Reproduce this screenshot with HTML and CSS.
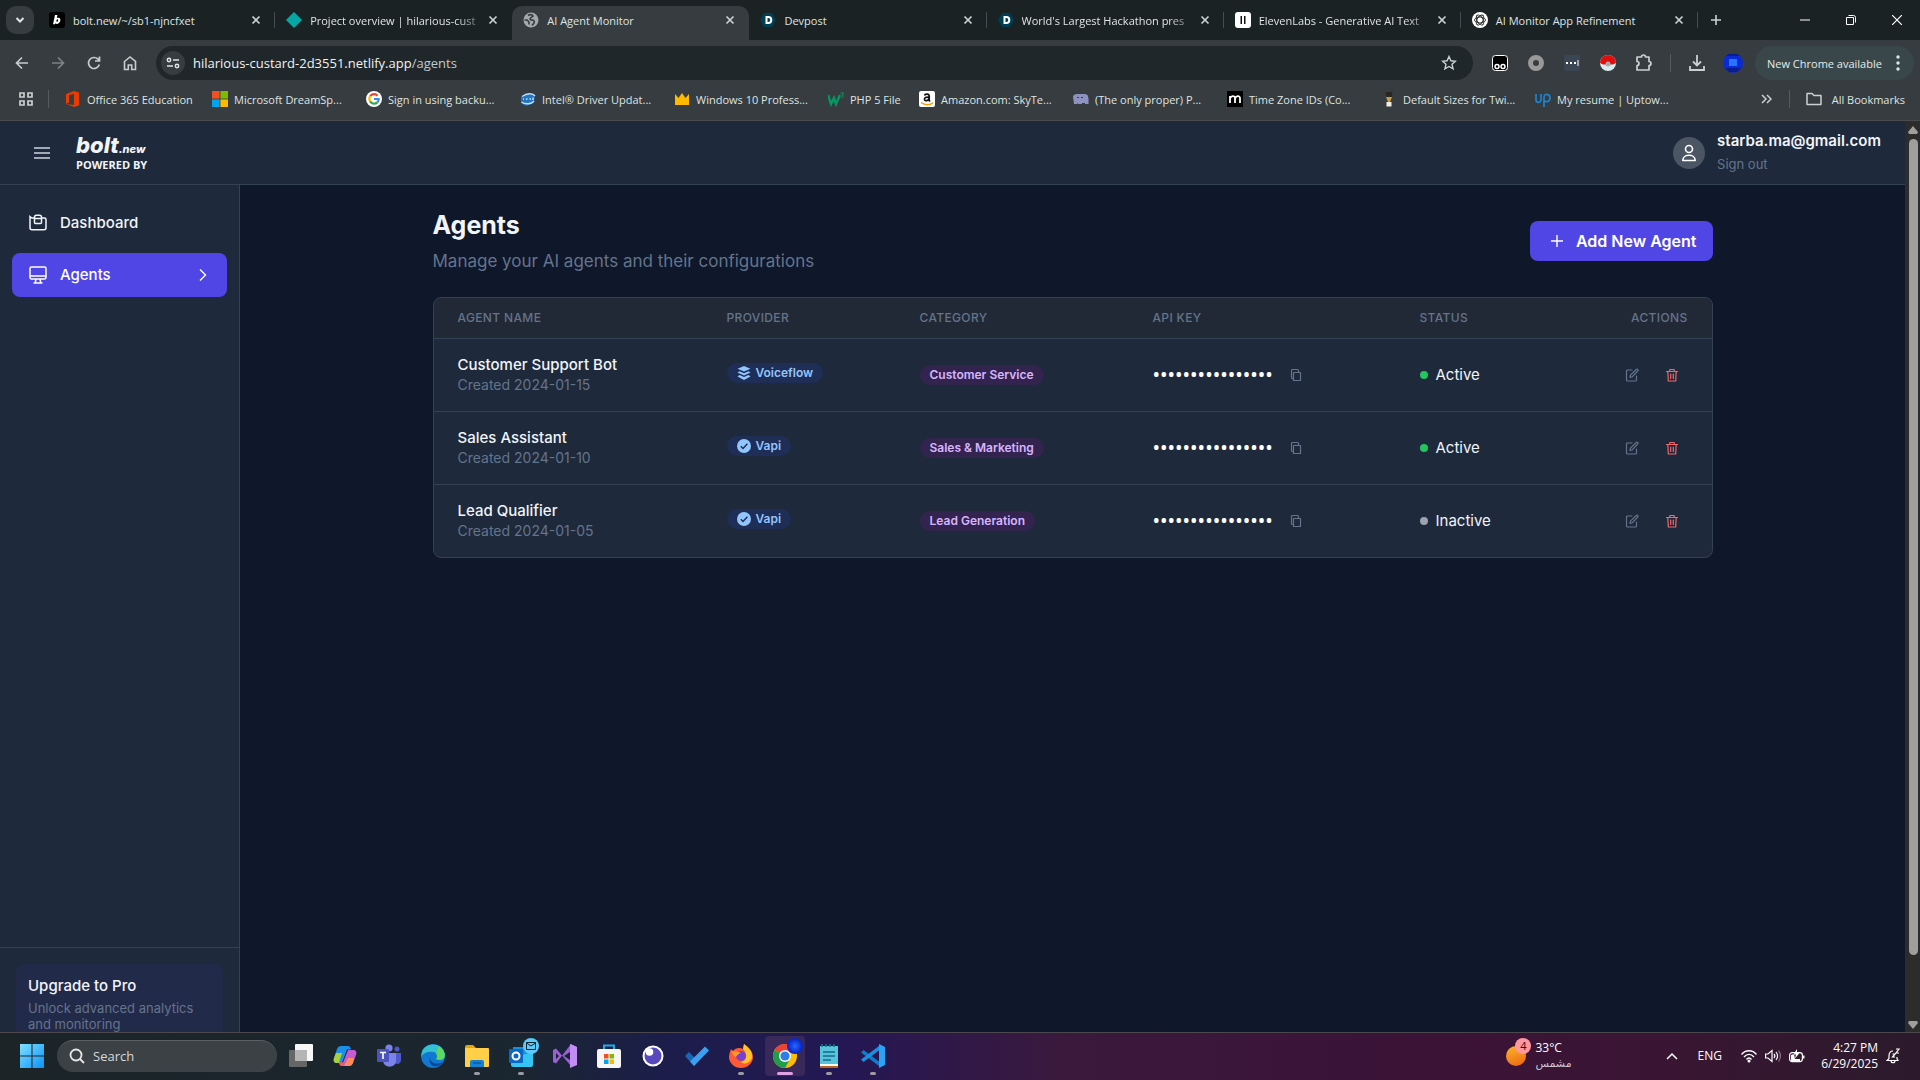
FILE: index.html
```html
<!DOCTYPE html>
<html lang="en">
<head>
    <meta charset="utf-8">
    <meta name="viewport" content="width=device-width, initial-scale=1">
    <title>AI Agent Monitor</title>
    <link rel="stylesheet" href="styles.css">
</head>
<body>
    <!-- shared icons -->
    <svg class="sprite" width="0" height="0">
        <symbol id="i-close" viewBox="0 0 10 10"><path d="M1.500 1.500l7 7M8.500 1.500l-7 7" fill="none" stroke="currentColor" stroke-width="1.700"/></symbol>
        <symbol id="i-devpost" viewBox="0 0 16 16"><path d="M4 1h8l4 7-4 7H4L0 8z" fill="#003e54"/><path d="M5.500 4h2.800a4 4 0 0 1 0 8H5.500zM7.500 6v4h.8a2 2 0 0 0 0-4z" fill="#fff"/></symbol>
        <symbol id="i-copy" viewBox="0 0 14 14"><path d="M4.500 4.500h7v8h-7zM4.500 10.500h-1a1 1 0 0 1-1-1v-7a1 1 0 0 1 1-1h5a1 1 0 0 1 1 1v2" fill="none" stroke="currentColor" stroke-width="1.200" stroke-linejoin="round"/></symbol>
        <symbol id="i-edit" viewBox="0 0 14 14"><path d="M7 2H2.500a1 1 0 0 0-1 1v9a1 1 0 0 0 1 1h8a1 1 0 0 0 1-1V8M5 9.500l.5-2.300 5.700-5.700a1 1 0 0 1 1.500 1.500L7.200 8.800z" fill="none" stroke="currentColor" stroke-width="1.200" stroke-linejoin="round" stroke-linecap="round"/></symbol>
        <symbol id="i-trash" viewBox="0 0 14 14"><path d="M1.500 3.500h11M2.800 3.500l.5 9.500h7.400l.5-9.500M4.800 3.500v-2h4.400v2M5.700 6v4.500M8.300 6v4.500" fill="none" stroke="currentColor" stroke-width="1.200" stroke-linejoin="round" stroke-linecap="round"/></symbol>
        <symbol id="i-check" viewBox="0 0 14 14"><circle cx="7" cy="7" r="7" fill="currentColor"/><path d="M3.800 7.300l2.200 2.200 4.400-4.700" fill="none" stroke="#1e2b50" stroke-width="1.400"/></symbol>
    </svg>

    <div class="tabstrip">
        <button class="tab-search" aria-label="Search tabs"><svg width="10" height="10" viewBox="0 0 10 10"><path d="M1.500 3l3.500 3.500L8.500 3" fill="none" stroke="#dfe4e4" stroke-width="2"/></svg></button>
        <div class="tabs">
            <div class="tab">
                <svg class="favicon" viewBox="0 0 16 16"><rect width="16" height="16" rx="3" fill="#000"/><path d="M6 3h2.400L7.800 6c2.500-1 4 .3 3.500 2.800-.6 3-3.600 3.900-5 2.500L6 12.300H4zM7.500 8.200c-.5 2 1.300 2 1.600.3.300-1.500-1.200-1.700-1.600-.3z" fill="#fff"/></svg>
                <span>bolt.new/~/sb1-njncfxet</span>
                <button aria-label="Close"><svg><use href="#i-close"/></svg></button>
            </div>
            <div class="tab no-sep">
                <svg class="favicon" viewBox="0 0 16 16"><path d="M8 0l8 8-8 8-8-8z" fill="#05a8a5"/></svg>
                <span class="fade">Project overview | hilarious-cust</span>
                <button aria-label="Close"><svg><use href="#i-close"/></svg></button>
            </div>
            <div class="tab active no-sep">
                <svg class="favicon" viewBox="0 0 16 16"><circle cx="8" cy="8" r="7.500" fill="#a3aaab"/><path d="M5 3.500c2-1.500 4-1 5 .5L7.500 6c-1 1 0 2 1.500 2s3 1 2 3l-2 2.500M1.500 8H4l2 2v2.500" fill="none" stroke="#363c3f" stroke-width="1.600"/></svg>
                <span>AI Agent Monitor</span>
                <button aria-label="Close"><svg><use href="#i-close"/></svg></button>
            </div>
            <div class="tab">
                <svg class="favicon"><use href="#i-devpost"/></svg>
                <span>Devpost</span>
                <button aria-label="Close"><svg><use href="#i-close"/></svg></button>
            </div>
            <div class="tab">
                <svg class="favicon"><use href="#i-devpost"/></svg>
                <span class="fade">World's Largest Hackathon pres</span>
                <button aria-label="Close"><svg><use href="#i-close"/></svg></button>
            </div>
            <div class="tab">
                <svg class="favicon" viewBox="0 0 16 16"><rect width="16" height="16" rx="3" fill="#fff"/><path d="M5.500 4h1.500v8H5.500zM9 4h1.500v8H9z" fill="#111"/></svg>
                <span class="fade">ElevenLabs - Generative AI Text</span>
                <button aria-label="Close"><svg><use href="#i-close"/></svg></button>
            </div>
            <div class="tab">
                <svg class="favicon" viewBox="0 0 16 16"><circle cx="8" cy="8" r="8" fill="#fff"/><g fill="none" stroke="#222" stroke-width=".9"><ellipse cx="8" cy="8" rx="5.500" ry="3"/><ellipse cx="8" cy="8" rx="5.500" ry="3" transform="rotate(60 8 8)"/><ellipse cx="8" cy="8" rx="5.500" ry="3" transform="rotate(120 8 8)"/></g></svg>
                <span>AI Monitor App Refinement</span>
                <button aria-label="Close"><svg><use href="#i-close"/></svg></button>
            </div>
        </div>
        <button class="new-tab" aria-label="New tab"><svg width="12" height="12" viewBox="0 0 12 12"><path d="M6 1v10M1 6h10" stroke="#c9d1d1" stroke-width="1.600"/></svg></button>
        <div class="window-buttons">
            <button aria-label="Minimize"><svg width="10" height="10" viewBox="0 0 10 10"><path d="M0 5h10" stroke="#fff"/></svg></button>
            <button aria-label="Restore"><svg width="10" height="10" viewBox="0 0 10 10"><path d="M.5 2.500h7v7h-7zM2.500.5h5a2 2 0 0 1 2 2v5" fill="none" stroke="#fff"/></svg></button>
            <button aria-label="Close window"><svg width="10" height="10" viewBox="0 0 10 10"><path d="M0 0l10 10M10 0L0 10" stroke="#fff" stroke-width="1.200"/></svg></button>
        </div>
    </div>

    <div class="toolbar">
        <div class="nav-buttons">
            <button aria-label="Back"><svg width="16" height="16" viewBox="0 0 16 16"><path d="M14 8H3M8 2.500L2.500 8 8 13.500" fill="none" stroke="#c5cdcd" stroke-width="1.700"/></svg></button>
            <button aria-label="Forward"><svg width="16" height="16" viewBox="0 0 16 16"><path d="M2 8h11M8 2.500L13.500 8 8 13.500" fill="none" stroke="#7b8485" stroke-width="1.700"/></svg></button>
            <button aria-label="Reload"><svg width="16" height="16" viewBox="0 0 16 16"><path d="M13.300 9.500A5.500 5.500 0 1 1 12 4.200l1.500 1.600M13.500 1.500v4.500H9" fill="none" stroke="#c5cdcd" stroke-width="1.700"/></svg></button>
            <button aria-label="Home"><svg width="16" height="16" viewBox="0 0 16 16"><path d="M2.500 6.500L8 2l5.500 4.500v8h-3.800V10H6.300v4.500H2.500z" fill="none" stroke="#c5cdcd" stroke-width="1.600"/></svg></button>
        </div>
        <div class="omnibox">
            <button class="site-info" aria-label="Site information"><svg width="14" height="14" viewBox="0 0 14 14"><g fill="none" stroke="#dfe4e4" stroke-width="1.500"><circle cx="3" cy="4" r="1.700"/><path d="M7 4h6M1 10h6"/><circle cx="11" cy="10" r="1.700"/></g></svg></button>
            <span class="url">hilarious-custard-2d3551.netlify.app<span>/agents</span></span>
            <button class="star" aria-label="Bookmark this tab"><svg width="16" height="16" viewBox="0 0 16 16"><path d="M8 1.500l1.900 4.300 4.600.4-3.500 3.100 1.100 4.600L8 11.500l-4.100 2.400L5 9.300 1.500 6.200l4.600-.4z" fill="none" stroke="#c9d1d1" stroke-width="1.400"/></svg></button>
        </div>
        <div class="extensions">
            <button aria-label="Tampermonkey"><svg width="16" height="16" viewBox="0 0 16 16"><rect x=".5" y=".5" width="15" height="15" rx="3" fill="#000" stroke="#fff"/><g fill="none" stroke="#fff" stroke-width="1.500"><circle cx="5" cy="11.500" r="2"/><circle cx="11" cy="11.500" r="2"/></g></svg></button>
            <button aria-label="Ring extension"><svg width="16" height="16" viewBox="0 0 16 16"><circle cx="8" cy="8" r="5.500" fill="none" stroke="#999" stroke-width="5"/></svg></button>
            <button aria-label="Password extension"><svg width="16" height="16" viewBox="0 0 16 16"><rect width="16" height="16" rx="2" fill="#3a4654"/><path d="M2 7h2v2H2zM6 7h2v2H6zM10 7h2v2h-2zM13.500 5h1v6h-1z" fill="#fff"/></svg></button>
            <button aria-label="Ball extension"><svg width="16" height="16" viewBox="0 0 16 16"><circle cx="8" cy="8" r="8" fill="#d9ecef"/><path d="M0 8a8 8 0 0 1 16 0l-3 1.500H3z" fill="#e00f0f"/><circle cx="8" cy="9" r="2.500" fill="#aaa"/></svg></button>
            <button aria-label="Extensions"><svg width="18" height="18" viewBox="0 0 18 18"><path d="M2 3h4.500a2 2 0 0 1 4 0H14v4.500a2 2 0 0 1 0 4V16H2v-4.500a2 2 0 0 0 0-4z" fill="none" stroke="#c9d1d1" stroke-width="1.700" stroke-linejoin="round"/></svg></button>
            <i class="divider"></i>
            <button aria-label="Downloads"><svg width="16" height="16" viewBox="0 0 16 16"><path d="M8 0v10M4 6.500l4 4 4-4M1 11v4h14v-4" fill="none" stroke="#c9d1d1" stroke-width="1.800"/></svg></button>
            <button aria-label="Profile"><svg width="20" height="20" viewBox="0 0 20 20"><circle cx="10" cy="10" r="10" fill="#0a2bd4"/><path d="M3 3h14l-3-2H6z" fill="#0a1d8c"/><rect x="6" y="6" width="8" height="7" fill="#2873ff"/><path d="M2 15h16l-4 4H6z" fill="#0a1d8c"/></svg></button>
        </div>
        <button class="update">New Chrome available<svg width="4" height="16" viewBox="0 0 4 16"><g fill="#dbe6e6"><circle cx="2" cy="2" r="1.700"/><circle cx="2" cy="8" r="1.700"/><circle cx="2" cy="14" r="1.700"/></g></svg></button>
    </div>

    <div class="bookmarks">
        <button class="apps" aria-label="Apps"><svg width="14" height="14" viewBox="0 0 14 14"><path d="M1 1h4v4H1zM9 1h4v4H9zM1 9h4v4H1zM9 9h4v4H9z" fill="none" stroke="#c9d1d1" stroke-width="1.700"/></svg></button>
        <i class="divider"></i>
        <nav>
            <a class="medium" href="#"><svg viewBox="0 0 16 16"><path d="M1 3l8-3 5 1.500v13L9 16l-8-3 8 1V3L4 4v7.500L1 13z" fill="#eb3c00"/></svg>Office 365 Education</a>
            <a href="#"><svg viewBox="0 0 16 16"><path d="M0 0h7.600v7.600H0z" fill="#f25022"/><path d="M8.400 0H16v7.600H8.400z" fill="#7fba00"/><path d="M0 8.400h7.600V16H0z" fill="#00a4ef"/><path d="M8.400 8.400H16V16H8.400z" fill="#ffb900"/></svg>Microsoft DreamSp...</a>
            <a href="#"><svg viewBox="0 0 16 16"><circle cx="8" cy="8" r="8" fill="#fff"/><g fill="none" stroke-width="2.200"><path d="M4.200 5.200A4.700 4.700 0 0 1 11.500 4.700" stroke="#ea4335"/><path d="M4 10.300a5 5 0 0 1 .2-5.100" stroke="#fbbc05"/><path d="M11.300 11.400A4.700 4.700 0 0 1 4 10.300" stroke="#34a853"/><path d="M8 8h4.700a4.700 4.700 0 0 1-1.400 3.400" stroke="#4285f4"/></g></svg>Sign in using backu...</a>
            <a href="#"><svg viewBox="0 0 16 16"><path d="M1 6l9-4 5 2-1 8-8 3-5-3z" fill="#2475bd"/><path d="M2 5.500C7 2 13 2 15 5M1.500 11c4 3 10 2 12.500-1M3 8h1m2 0h1.500m2 0H11m2-1.500V9" fill="none" stroke="#b8e0ff" stroke-width="1.400"/></svg>Intel® Driver Updat...</a>
            <a href="#"><svg viewBox="0 0 16 16"><path d="M1 3l3.500 4L8 2l3.500 5L15 3v8H1zM1 11h14v3H1z" fill="#ffb900"/></svg>Windows 10 Profess...</a>
            <a class="short" href="#"><svg viewBox="0 0 16 16"><path d="M0 4l3 9 3-6 2 6 4-9" fill="none" stroke="#059862" stroke-width="2.400"/><path d="M12.500 2h3l-1.500 2c2 0 2 2.500-1 2.500" fill="none" stroke="#059862"/></svg>PHP 5 File</a>
            <a href="#"><svg viewBox="0 0 16 16"><rect width="16" height="16" rx="2" fill="#fff"/><path d="M5.500 4.500c.5-2 4.700-2 4.700.5v4.500l.8 1M10 6.200c-3-.2-4.800.5-4.500 2.300.4 2 4 1.300 4.500-1" fill="none" stroke="#111" stroke-width="1.700"/><path d="M2 11.500c4 3 8 3 12 .3" fill="none" stroke="#f90" stroke-width="1.500"/></svg>Amazon.com: SkyTe...</a>
            <a href="#"><svg viewBox="0 0 16 16"><path d="M0 6c0-2 2-3 4-3h8c3 0 4 3 3.500 10H12v-1H9v1H5v-1l-1 1H1z" fill="#8d92bf"/><path d="M4 6.500h2m2 0h2" stroke="#363c3f"/></svg>(The only proper) P...</a>
            <a href="#"><svg viewBox="0 0 16 16"><path d="M0 0h16v16H0z" fill="#000"/><path d="M3 12V5m0 2.500C4 4.500 8 4.500 8 7v5M8 7.500C9 4.500 13 4.500 13 7v5" fill="none" stroke="#fff" stroke-width="1.800"/></svg>Time Zone IDs (Co...</a>
            <a href="#"><svg viewBox="0 0 16 16"><path d="M4.500 1h7l-1 6h-5z" fill="#2a2620"/><path d="M5 6h6l-2 5H7z" fill="#c89b48"/><path d="M5.500 11h5v4.500h-5z" fill="#f3eee0"/></svg>Default Sizes for Twi...</a>
            <a href="#"><svg viewBox="0 0 16 16"><path d="M1 3v5.500c0 4 5 4 5 0V3M9 16V6c0-4 6-3.500 6 1s-5.500 4.500-6 2" fill="none" stroke="#1d83cf" stroke-width="1.700"/></svg>My resume | Uptow...</a>
        </nav>
        <button class="more" aria-label="More bookmarks"><svg width="12" height="10" viewBox="0 0 12 10"><path d="M2 1l4 4-4 4M7 1l4 4-4 4" fill="none" stroke="#c9d1d1" stroke-width="1.500"/></svg></button>
        <i class="divider"></i>
        <a class="all" href="#"><svg viewBox="0 0 16 16"><path d="M1 13.500v-11h5l2 2h7v9z" fill="none" stroke="#c9d1d1" stroke-width="1.500" stroke-linejoin="round"/></svg>All Bookmarks</a>
    </div>

    <div class="viewport">
        <div class="app">
            <header class="app-header">
                <button class="menu" aria-label="Toggle menu"><svg width="16" height="14" viewBox="0 0 16 14"><path d="M0 2h16M0 7h16M0 12h16" stroke="#cbd5e1" stroke-width="1.600"/></svg></button>
                <a class="brand" href="#"><span class="brand-name">bolt<small>.new</small></span><span class="powered">POWERED BY</span></a>
                <div class="user">
                    <span class="avatar"><svg width="16" height="18" viewBox="0 0 16 18"><g fill="none" stroke="#fff" stroke-width="1.600"><circle cx="8" cy="5" r="3.500"/><path d="M1.800 16.500c0-7 12.400-7 12.400 0z" stroke-linejoin="round"/></g></svg></span>
                    <div>
                        <p class="email">starba.ma@gmail.com</p>
                        <button class="sign-out">Sign out</button>
                    </div>
                </div>
            </header>

            <div class="app-body">
                <aside>
                    <nav>
                        <a href="#"><svg viewBox="0 0 20 20"><path d="M6.500 5H3.800L2 3.500v11.300a2 2 0 0 0 2 2h12a2 2 0 0 0 2-2V6.500A1.500 1.500 0 0 0 16.500 5h-3M6.500 9.500V4.300a2 2 0 0 1 2-2h3a2 2 0 0 1 2 2v5.200a1 1 0 0 1-1 1h-5a1 1 0 0 1-1-1zM6.500 5.500h7" fill="none" stroke="currentColor" stroke-width="1.500"/></svg>Dashboard</a>
                        <a class="current" href="#"><svg viewBox="0 0 20 20"><path d="M3.500 2h13a1.500 1.500 0 0 1 1.500 1.500v9a1.500 1.500 0 0 1-1.500 1.500h-13A1.500 1.500 0 0 1 2 12.500v-9A1.500 1.500 0 0 1 3.500 2zM2 11h16M8 14l-.8 4M12 14l.8 4M5.500 18h9" fill="none" stroke="currentColor" stroke-width="1.500"/></svg>Agents<svg class="chevron" viewBox="0 0 16 16"><path d="M5 2.500L10.500 8 5 13.500" fill="none" stroke="currentColor" stroke-width="1.400"/></svg></a>
                    </nav>
                    <div class="aside-footer">
                        <div class="upgrade">
                            <h4>Upgrade to Pro</h4>
                            <p>Unlock advanced analytics and monitoring</p>
                        </div>
                    </div>
                </aside>

                <main>
                    <div class="content">
                        <div class="page-head">
                            <div>
                                <h1>Agents</h1>
                                <p>Manage your AI agents and their configurations</p>
                            </div>
                            <button class="add"><svg width="14" height="14" viewBox="0 0 14 14"><path d="M7 1v12M1 7h12" stroke="#fff" stroke-width="1.400"/></svg>Add New Agent</button>
                        </div>

                        <div class="card">
                            <table>
                                <thead>
                                    <tr>
                                        <th class="c-name">AGENT NAME</th>
                                        <th class="c-provider">PROVIDER</th>
                                        <th class="c-category">CATEGORY</th>
                                        <th class="c-key">API KEY</th>
                                        <th class="c-status">STATUS</th>
                                        <th class="c-actions">ACTIONS</th>
                                    </tr>
                                </thead>
                                <tbody>
                                    <tr>
                                        <td><div class="name">Customer Support Bot</div><div class="created">Created 2024-01-15</div></td>
                                        <td><span class="badge provider"><svg viewBox="0 0 14 14"><path d="M7 0l6.500 2.800L7 5.600.5 2.800zM2.500 5.200L7 7.200l4.500-2 2 1.300L7 9.600.5 6.500zM2.500 9L7 11l4.500-2 2 1.500L7 14 .5 10.500z" fill="currentColor"/></svg>Voiceflow</span></td>
                                        <td><span class="badge category">Customer Service</span></td>
                                        <td><div class="key"><span>••••••••••••••••</span><button aria-label="Copy API key"><svg><use href="#i-copy"/></svg></button></div></td>
                                        <td><span class="status active">Active</span></td>
                                        <td><div class="actions"><button aria-label="Edit"><svg><use href="#i-edit"/></svg></button><button class="delete" aria-label="Delete"><svg><use href="#i-trash"/></svg></button></div></td>
                                    </tr>
                                    <tr>
                                        <td><div class="name">Sales Assistant</div><div class="created">Created 2024-01-10</div></td>
                                        <td><span class="badge provider"><svg><use href="#i-check"/></svg>Vapi</span></td>
                                        <td><span class="badge category">Sales &amp; Marketing</span></td>
                                        <td><div class="key"><span>••••••••••••••••</span><button aria-label="Copy API key"><svg><use href="#i-copy"/></svg></button></div></td>
                                        <td><span class="status active">Active</span></td>
                                        <td><div class="actions"><button aria-label="Edit"><svg><use href="#i-edit"/></svg></button><button class="delete" aria-label="Delete"><svg><use href="#i-trash"/></svg></button></div></td>
                                    </tr>
                                    <tr>
                                        <td><div class="name">Lead Qualifier</div><div class="created">Created 2024-01-05</div></td>
                                        <td><span class="badge provider"><svg><use href="#i-check"/></svg>Vapi</span></td>
                                        <td><span class="badge category">Lead Generation</span></td>
                                        <td><div class="key"><span>••••••••••••••••</span><button aria-label="Copy API key"><svg><use href="#i-copy"/></svg></button></div></td>
                                        <td><span class="status">Inactive</span></td>
                                        <td><div class="actions"><button aria-label="Edit"><svg><use href="#i-edit"/></svg></button><button class="delete" aria-label="Delete"><svg><use href="#i-trash"/></svg></button></div></td>
                                    </tr>
                                </tbody>
                            </table>
                        </div>
                    </div>
                </main>
            </div>
        </div>
        <div class="scrollbar">
            <svg width="10" height="8" viewBox="0 0 10 8"><path d="M5 0l5 6-1 2H1L0 6z" fill="#9f9f9f"/></svg>
            <div class="track"><div class="thumb"></div></div>
            <svg width="10" height="8" viewBox="0 0 10 8"><path d="M5 8l5-6-1-2H1L0 2z" fill="#9f9f9f"/></svg>
        </div>
    </div>

    <footer class="taskbar">
        <button class="start" aria-label="Start"><svg width="24" height="24" viewBox="0 0 24 24"><defs><linearGradient id="win" x1="0" y1="0" x2="1" y2="1"><stop offset="0" stop-color="#7fe0ff"/><stop offset="1" stop-color="#0a93f8"/></linearGradient></defs><path d="M0 0h11.500v11.500H0zM12.500 0H24v11.500H12.500zM0 12.500h11.500V24H0zM12.500 12.500H24V24H12.500z" fill="url(#win)"/></svg></button>
        <label class="search"><svg width="16" height="16" viewBox="0 0 16 16"><g fill="none" stroke="#e6e8e8" stroke-width="1.800"><circle cx="7" cy="7" r="5.500"/><path d="M11 11l4 4"/></g></svg><input type="text" placeholder="Search" aria-label="Search"></label>
        <div class="pinned">
            <button aria-label="Task view"><svg viewBox="0 0 24 24"><rect x="6" y="0" width="18" height="17" rx="1" fill="#f7f7f7"/><rect x="0" y="6" width="18" height="17" rx="1" fill="#666"/><path d="M6 6h12v11H6z" fill="#b5b5b5"/></svg></button>
            <button aria-label="Copilot"><svg viewBox="0 0 24 24"><path d="M8 2h7c2 0 2.500 1.500 3 3.500h-4L9 19H4c-3 0-4-2-3-5L4 5c1-2 2-3 4-3z" fill="#1b8ee8"/><path d="M3 9h6l-3 10H4c-3 0-4-2-3-5z" fill="#a6d13a"/><path d="M16 22H9c-2 0-2.500-1.500-3-3.500h4L15 6h5c3 0 4 2 3 5l-3 8c-1 2-2 3-4 3z" fill="#c65bd6"/><path d="M21 14h-6l-4 8h5c2 0 3-1 4-3z" fill="#ff8b5c"/><path d="M6 18.500h4L9 22c-2 0-2.500-1.500-3-3.500z" fill="#ff5a2c"/></svg></button>
            <button aria-label="Teams"><svg viewBox="0 0 24 24"><circle cx="12" cy="4" r="3.600" fill="#7b83eb"/><circle cx="20" cy="5" r="2.500" fill="#5059c9"/><path d="M16 9h8v7c0 4-4 5-6 3z" fill="#5059c9"/><path d="M6 9h13v8c0 7-12 8-13 0z" fill="#7b83eb"/><rect x="0" y="5" width="12" height="13" rx="1" fill="#4b53bc"/><path d="M3 8.500h6M6 8.500V15" stroke="#fff" stroke-width="1.600"/></svg></button>
            <button aria-label="Edge"><svg viewBox="0 0 24 24"><circle cx="12" cy="12" r="12" fill="#1178d4"/><path d="M1 8C4-2 22-3 24 11c0 5-5 6-9 4 3-3 1-7-3-7C7 7 2 9 0 13z" fill="#35c1d0"/><path d="M18 2c6 4 8 12 2 14-3 0-4-1-5-1 2-2 1-4 0-5z" fill="#5fd959"/><path d="M9 12c-1 6 5 10 13 6-4 7-16 6-13-6z" fill="#0c4a94"/></svg></button>
            <button class="open" aria-label="File Explorer"><svg viewBox="0 0 24 24"><path d="M0 3a2 2 0 0 1 2-2h6l3 3v5H0z" fill="#e8a50b"/><rect y="4" width="24" height="19" rx="1" fill="#ffcf48"/><path d="M5 23v-5a2 2 0 0 1 2-2h10a2 2 0 0 1 2 2v5z" fill="#1481d4"/><path d="M8 19h8" stroke="#0c5aa0" stroke-width="1.500"/></svg></button>
            <button class="open" aria-label="Outlook"><svg viewBox="0 0 24 24"><path d="M4 3h18v16H4z" fill="#1490df"/><path d="M2 14l22-6v13a2 2 0 0 1-2 2H4a2 2 0 0 1-2-2z" fill="#36c5f3"/><rect y="5" width="14" height="14" rx="1" fill="#0a67c2"/><circle cx="7" cy="12" r="3.500" fill="none" stroke="#fff" stroke-width="2"/></svg><span class="mail-badge"><svg viewBox="0 0 10 8"><path d="M.5.500h9v7h-9zM.5 1l4.500 3L9.500 1" fill="none" stroke="#10222f"/></svg></span></button>
            <button aria-label="Visual Studio"><svg viewBox="0 0 24 24"><path d="M0 6l3-1.500L18 22l6-2V3l-6-3L3 19.500 0 18z" fill="#9a5fd0"/><path d="M17 0l7 3v18l-7 3z" fill="#c48df5"/><path d="M3 9v6l3-3zM17 8v8l-6-4z" fill="#192133"/></svg></button>
            <button aria-label="Store"><svg viewBox="0 0 24 24"><path d="M7 6V1.500h10V6" fill="none" stroke="#25a7ec" stroke-width="2"/><rect y="5" width="24" height="19" rx="2" fill="#f6f6f6"/><path d="M7 10h4.500v4.500H7z" fill="#f25022"/><path d="M12.500 10H17v4.500h-4.500z" fill="#7fba00"/><path d="M7 15.500h4.500V20H7z" fill="#00a4ef"/><path d="M12.500 15.500H17V20h-4.500z" fill="#ffb900"/></svg></button>
            <button aria-label="Insomnia"><svg viewBox="0 0 24 24"><circle cx="12" cy="12" r="10.500" fill="#fff"/><circle cx="12" cy="12" r="8.500" fill="#5849be"/><circle cx="8.500" cy="8" r="3.800" fill="#fff"/></svg></button>
            <button aria-label="To Do"><svg viewBox="0 0 24 24"><path d="M0 12l4-4 9 9-4 5z" fill="#1767b8"/><path d="M9 22L5 17.500 20 2.500l4 4z" fill="#3aa0ef"/></svg></button>
            <button class="open" aria-label="Firefox"><svg viewBox="0 0 24 24"><path d="M2 5l2 2c2-3 7-4 10-2l1-5c4 3 9 7 9 13a12 11 0 0 1-24 0c0-3 1-5 2-8z" fill="#ff5a36"/><path d="M14 5l1-5c4 3 9 7 8 14-3 7-10 6-11 4 6-1 7-8 2-13z" fill="#ffc32b"/><circle cx="12" cy="12" r="5" fill="#7a3fd0"/><path d="M3 7c4 1 6 0 9 2-3 1-4 2-5 4-3-1-4-3-4-6z" fill="#ff9725"/></svg></button>
            <button class="open focused" aria-label="Chrome"><svg viewBox="0 0 24 24"><circle cx="12" cy="12" r="12" fill="#fbbc04"/><path d="M12 12L1.600 6A12 12 0 0 1 22.400 6z" fill="#ea4335"/><path d="M12 12L1.600 6A12 12 0 0 0 12 24l4-7z" fill="#1e9e4a"/><circle cx="12" cy="12" r="6" fill="#fff"/><circle cx="12" cy="12" r="4.600" fill="#2f7de9"/></svg><span class="profile-badge"></span></button>
            <button class="open" aria-label="Notepad"><svg viewBox="0 0 24 24"><path d="M3 2h18v19H3z" fill="#58c4dc"/><path d="M5 0v3M9 0v3M13 0v3M17 0v3" stroke="#1a6f8d" stroke-width="1.500"/><path d="M6 8h12M6 12h12M6 16h8" stroke="#15688a" stroke-width="1.600"/><path d="M3 20h18v2H3z" fill="#fff"/><path d="M3 22h18v2H3z" fill="#b5651d"/></svg></button>
            <button class="open" aria-label="Visual Studio Code"><svg viewBox="0 0 24 24"><path d="M0 8.500L2.500 6 20 19v4.500z" fill="#0f7ccc"/><path d="M0 15.500L2.500 18 20 5V.5z" fill="#1a8fdf"/><path d="M18 0l6 3v18l-6 3z" fill="#2aa4f2"/></svg></button>
        </div>
        <button class="weather">
            <span class="sun"><i>4</i></span>
            <span class="temp">33°C<small lang="ar">مشمس</small></span>
        </button>
        <div class="tray">
            <button class="tray-up" aria-label="Show hidden icons"><svg width="12" height="8" viewBox="0 0 12 8"><path d="M1 7l5-5 5 5" fill="none" stroke="#fff" stroke-width="1.500"/></svg></button>
            <span class="lang">ENG</span>
            <svg width="16" height="14" viewBox="0 0 16 14"><g fill="none" stroke="#fff" stroke-width="1.400"><path d="M.5 5.500c4-5 11-5 15 0M3 8c3-3.500 7-3.500 10 0M5.500 10.500c1.500-2 3.500-2 5 0"/></g><circle cx="8" cy="12" r="1.500" fill="#fff"/></svg>
            <svg width="16" height="14" viewBox="0 0 16 14"><g fill="none" stroke="#fff" stroke-width="1.200"><path d="M.6 5h2.400L7 1.500v11L3 9H.6zM9 5c1 1.200 1 2.800 0 4M11 3c2 2.500 2 5.500 0 8"/><path d="M13.500 1.500c2.500 3.500 2.500 7.500 0 11" stroke="#8a7388"/></g></svg>
            <svg width="16" height="14" viewBox="0 0 16 14"><rect x=".6" y="3.600" width="12.800" height="9" rx="2.500" fill="none" stroke="#fff" stroke-width="1.200"/><path d="M2 6l3-1 1 5h5v2H2zM8 0L4.500 5.500H7L6 9.500 10.500 4H8z" fill="#fff"/><path d="M14.800 6.500v3" stroke="#fff" stroke-width="1.400"/></svg>
            <div class="clock">4:27 PM<br>6/29/2025</div>
            <svg width="14" height="16" viewBox="0 0 14 16"><g fill="none" stroke="#fff" stroke-width="1.200"><path d="M7 3C4 3 3 5 3 8v2.500L1 12.500h11l-1-2V9M5 12.500c0 3 4 3 4 0M6.500 6H9L6.500 9H9M10 1h3l-3 4h3"/></g></svg>
        </div>
    </footer>
</body>
</html>
```

FILE: styles.css
```css
* {
    box-sizing: border-box;
}
body {
    height: 100vh;
    margin: 0;
    display: flex;
    flex-direction: column;
    overflow: hidden;
    font-family: "Open Sans", "Noto Sans", sans-serif;
    font-size: 11px;
    color: #dfe4e4;
    background-color: #0f172a;
}
h1, h4, p {
    margin: 0;
}
button {
    display: flex;
    align-items: center;
    justify-content: center;
    padding: 0;
    border: none;
    background: none;
    color: inherit;
    font: inherit;
    cursor: pointer;
}
a {
    color: inherit;
    text-decoration: none;
}
svg {
    flex: none;
}
.sprite {
    position: absolute;
}
.divider {
    flex: none;
    width: 1px;
    height: 18px;
    background-color: #535c5f;
}

/* browser tabs */
.tabstrip {
    flex: none;
    display: flex;
    height: 40px;
    background-color: #1b2224;
}
.tab-search {
    flex: none;
    width: 28px;
    height: 28px;
    margin: 6px 4px 6px 6px;
    border-radius: 10px;
    background-color: #363c3f;
}
.tabs {
    flex: 0 1 1660px;
    display: flex;
    min-width: 0;
}
.tab {
    flex: 1 1 0;
    min-width: 0;
    display: flex;
    align-items: center;
    gap: 8px;
    height: 34px;
    margin-top: 6px;
    padding: 0 14px 6px 11px;
    position: relative;
}
.tab::after {
    content: "";
    position: absolute;
    right: 0;
    top: 6px;
    width: 1px;
    height: 16px;
    background-color: #454d50;
}
.tab.no-sep::after {
    display: none;
}
.tab span {
    flex: 1;
    white-space: nowrap;
}
.tab .fade {
    mask-image: linear-gradient(to left, rgba(0, 0, 0, 0.3), #000 24px);
}
.tab button svg {
    width: 10px;
    height: 10px;
    color: #c9d1d1;
}
.tab.active {
    background-color: #363c3f;
    border-radius: 10px 10px 0 0;
}
.favicon {
    width: 16px;
    height: 16px;
}
.new-tab {
    width: 36px;
    height: 40px;
}
.window-buttons {
    display: flex;
    margin-left: auto;
}
.window-buttons button {
    width: 46px;
}

/* address bar */
.toolbar {
    flex: none;
    display: flex;
    align-items: center;
    height: 46px;
    padding: 0 6px 0 4px;
    background-color: #363c3f;
}
.nav-buttons {
    display: flex;
    margin-right: 8px;
}
.nav-buttons button,
.extensions button {
    width: 36px;
    height: 34px;
}
.omnibox {
    flex: 1;
    display: flex;
    align-items: center;
    height: 34px;
    padding: 0 16px 0 5px;
    border-radius: 17px;
    background-color: #20272a;
}
.site-info {
    width: 24px;
    height: 24px;
    margin-right: 8px;
    border-radius: 12px;
    background-color: #363c3f;
}
.url {
    flex: 1;
    font-size: 13px;
    color: #f0f3f3;
}
.url span {
    color: #c2c9ca;
}
.extensions {
    display: flex;
    align-items: center;
    margin: 0 4px 0 9px;
}
.extensions .divider {
    margin: 0 8px;
}
.update {
    min-width: 159px;
    height: 34px;
    padding: 0 14px 0 12px;
    gap: 10px;
    justify-content: space-between;
    border-radius: 17px;
    background-color: #3a474a;
    color: #e0ecec;
}

/* bookmarks bar */
.bookmarks {
    flex: none;
    display: flex;
    align-items: center;
    height: 35px;
    padding: 0 15px 8px 19px;
    background-color: #363c3f;
    border-bottom: 1px solid #4a4c4b;
    white-space: nowrap;
}
.bookmarks .divider {
    margin: 0 16px 0 15px;
}
.bookmarks nav {
    flex: 1;
    display: flex;
}
.bookmarks a {
    flex: 0 0 154px;
    display: flex;
    align-items: center;
    gap: 6px;
}
.bookmarks .medium {
    flex-basis: 147px;
}
.bookmarks .short {
    flex-basis: 91px;
}
.bookmarks .all {
    flex: none;
    gap: 10px;
}
.bookmarks a svg {
    width: 16px;
    height: 16px;
}
.bookmarks .more {
    margin-right: 2px;
}

/* page */
.viewport {
    flex: 1;
    min-height: 0;
    display: flex;
    font-family: Inter, "Open Sans", sans-serif;
    font-size: 14px;
    line-height: 20px;
    color: #f1f5f9;
}
.app {
    flex: 1;
    display: flex;
    flex-direction: column;
}
.app-header {
    flex: none;
    display: flex;
    align-items: center;
    height: 64px;
    padding: 0 24px 0 34px;
    background-color: #1e293b;
    border-bottom: 1px solid #334155;
}
.brand {
    display: flex;
    flex-direction: column;
    margin-left: 26px;
    line-height: 12px;
}
.brand-name {
    font-size: 22px;
    font-style: italic;
    font-weight: 800;
    line-height: 20px;
}
.brand-name small {
    font-size: 11px;
}
.powered {
    font-family: "Open Sans", sans-serif;
    font-size: 11px;
    font-weight: 700;
}
.user {
    display: flex;
    align-items: center;
    gap: 12px;
    margin-left: auto;
}
.avatar {
    display: flex;
    align-items: center;
    justify-content: center;
    width: 32px;
    height: 32px;
    border-radius: 50%;
    background-color: #4b5563;
}
.email {
    font-size: 15px;
    font-weight: 600;
    line-height: 22px;
}
.sign-out {
    font-size: 13px;
    line-height: 24px;
    color: #64748b;
}
.app-body {
    flex: 1;
    min-height: 0;
    display: flex;
}

/* sidebar */
aside {
    flex: none;
    display: flex;
    flex-direction: column;
    width: 240px;
    background-color: #1e293b;
    border-right: 1px solid #334155;
}
aside nav {
    flex: 1;
    display: flex;
    flex-direction: column;
    gap: 8px;
    padding: 16px 12px;
}
aside nav a {
    display: flex;
    align-items: center;
    gap: 12px;
    height: 44px;
    padding: 0 16px;
    border-radius: 8px;
    font-size: 15px;
    font-weight: 500;
}
aside nav svg {
    width: 20px;
    height: 20px;
}
aside .current {
    background-color: #4f46e5;
    color: #fff;
}
aside nav .chevron {
    width: 16px;
    height: 16px;
    margin-left: auto;
}
.aside-footer {
    flex: none;
    height: 85px;
    padding: 16px 16px 0;
    overflow: hidden;
    border-top: 1px solid #334155;
}
.upgrade {
    height: 120px;
    padding: 12px;
    border-radius: 8px;
    background-color: #222a4a;
}
.upgrade h4 {
    font-size: 15px;
    font-weight: 500;
}
.upgrade p {
    margin-top: 4px;
    font-size: 13px;
    line-height: 16px;
    color: #64748b;
}

/* agents page */
main {
    flex: 1;
    padding: 24px;
    background-color: #0f172a;
}
.content {
    max-width: 1280px;
    margin: 0 auto;
}
.page-head {
    display: flex;
    align-items: center;
    justify-content: space-between;
    margin-bottom: 24px;
}
h1 {
    font-size: 25px;
    font-weight: 700;
    line-height: 32px;
}
.page-head p {
    margin-top: 8px;
    font-size: 17px;
    line-height: 24px;
    color: #64748b;
}
.add {
    gap: 12px;
    height: 40px;
    padding: 0 16px 0 20px;
    border-radius: 8px;
    background-color: #4f46e5;
    color: #fff;
    font-size: 16px;
    font-weight: 600;
}
.card {
    overflow: hidden;
    border: 1px solid #334155;
    border-radius: 8px;
    background-color: #1e293b;
}
table {
    width: 100%;
    table-layout: fixed;
    border-collapse: collapse;
}
th {
    height: 40px;
    padding: 0 24px;
    background-color: #212936;
    color: #64748b;
    font-size: 12px;
    font-weight: 500;
    letter-spacing: 0.03em;
    text-align: left;
}
td {
    height: 73px;
    padding: 0 24px;
    border-top: 1px solid #334155;
}
.c-name {
    width: 269px;
}
.c-provider {
    width: 193px;
}
.c-category {
    width: 233px;
}
.c-key {
    width: 267px;
}
.c-actions {
    text-align: right;
}
.name {
    font-size: 15px;
    font-weight: 500;
}
.created {
    color: #64748b;
}
.badge {
    display: inline-flex;
    align-items: center;
    gap: 5px;
    height: 20px;
    padding: 0 10px;
    border-radius: 10px;
    font-size: 12px;
    font-weight: 600;
    vertical-align: middle;
}
.badge svg {
    width: 14px;
    height: 14px;
}
.provider {
    margin-bottom: 4px;
    background-color: #1e2e56;
    color: #93c5fd;
}
.category {
    background-color: #33244f;
    color: #d8b4fe;
}
.key {
    display: flex;
    align-items: center;
    gap: 16px;
    white-space: nowrap;
}
.key span {
    font-family: "Noto Sans", sans-serif;
    font-size: 20px;
    color: #fff;
}
.key svg,
.actions svg {
    width: 14px;
    height: 14px;
    color: #64748b;
}
.status {
    display: flex;
    align-items: center;
    gap: 8px;
    font-size: 15px;
}
.status::before {
    content: "";
    width: 8px;
    height: 8px;
    border-radius: 50%;
    background-color: #9ca3af;
}
.status.active::before {
    background-color: #22c55e;
}
.actions {
    display: flex;
    justify-content: flex-end;
    gap: 8px;
}
.actions button {
    width: 32px;
    height: 32px;
}
.actions .delete svg {
    color: #f0686a;
}
.scrollbar {
    flex: none;
    display: flex;
    flex-direction: column;
    align-items: center;
    gap: 5px;
    width: 15px;
    padding: 5px 0 3px 1px;
    background-color: #2c2c2c;
}
.track {
    flex: 1;
}
.thumb {
    width: 9px;
    height: 93%;
    border-radius: 5px;
    background-color: #9f9f9f;
}

/* taskbar */
.taskbar {
    flex: none;
    display: flex;
    align-items: center;
    height: 48px;
    padding: 0 0 2px 20px;
    border-top: 1px solid #4c474d;
    background: linear-gradient(90deg, #1c2427 0%, #1a2630 27%, #1c1d4b 35%, #241754 44%, #3a193d 55%, #3a1337 75%, #3b1534 85%, #2b1a2b 100%);
    font-size: 12px;
}
.start {
    width: 24px;
}
.search {
    display: flex;
    align-items: center;
    gap: 8px;
    width: 220px;
    height: 32px;
    margin: 0 4px 0 13px;
    padding: 0 12px;
    border-radius: 16px;
    border-top: 1px solid #5b6062;
    background-color: #3b4144;
}
.search input {
    flex: 1;
    min-width: 0;
    padding: 0;
    border: none;
    outline: none;
    background: none;
    color: #fff;
    font: 13px "Open Sans", sans-serif;
}
.search input::placeholder {
    color: #d6d9d9;
}
.pinned {
    display: flex;
    gap: 4px;
}
.pinned button {
    position: relative;
    width: 40px;
    height: 40px;
    border-radius: 4px;
}
.pinned button > svg {
    width: 24px;
    height: 24px;
}
.pinned .open::after {
    content: "";
    position: absolute;
    bottom: 1px;
    width: 6px;
    height: 3px;
    border-radius: 2px;
    background-color: #9b9ba3;
}
.pinned .focused {
    background-color: #38295a;
}
.pinned .focused::after {
    width: 16px;
    background-color: #dfa0e6;
}
.mail-badge,
.profile-badge {
    position: absolute;
    top: 2px;
    right: 2px;
    display: flex;
    align-items: center;
    justify-content: center;
    width: 16px;
    height: 16px;
    border-radius: 50%;
    background-color: #5fcbfa;
}
.mail-badge svg {
    width: 10px;
    height: 8px;
}
.profile-badge {
    background: radial-gradient(#2468ff, #0a2acb 60%, #071260);
}
.weather {
    gap: 9px;
    margin-left: auto;
    color: #fff;
    text-align: left;
}
.sun {
    position: relative;
    width: 20px;
    height: 20px;
    border-radius: 50%;
    background: linear-gradient(160deg, #f9b62c, #ee6410);
}
.sun i {
    position: absolute;
    top: -8px;
    left: 9px;
    width: 16px;
    height: 16px;
    border-radius: 50%;
    background-color: #ff97a1;
    color: #301018;
    font-size: 11px;
    font-style: normal;
    line-height: 16px;
    text-align: center;
}
.temp {
    line-height: 16px;
}
.temp small {
    display: block;
    font-family: "DejaVu Sans", sans-serif;
    font-size: 11px;
    color: #cfc3ce;
}
.tray {
    display: flex;
    align-items: center;
    gap: 8px;
    margin-left: 94px;
    padding-right: 20px;
    color: #fff;
}
.lang {
    margin: 0 11px 0 12px;
}
.clock {
    width: 65px;
    line-height: 16px;
    text-align: right;
}
```
